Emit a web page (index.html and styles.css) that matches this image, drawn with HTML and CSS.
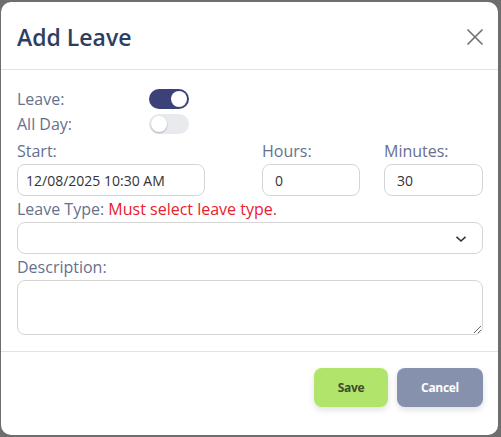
FILE: index.html
```html
<!DOCTYPE html>
<html lang="en">
<head>
<meta charset="utf-8">
<title>Add Leave</title>
<link rel="stylesheet" href="styles.css">
</head>
<body>
<div class="modal">
  <div class="modal-header">
    <h1 class="modal-title">Add Leave</h1>
    <button class="close" aria-label="Close">
      <svg width="18" height="18" viewBox="0 0 18 18"><path d="M1.5 1.5 L16.5 16.5 M16.5 1.5 L1.5 16.5" stroke="#707070" stroke-width="1.6" fill="none"/></svg>
    </button>
  </div>
  <div class="modal-body">
    <div class="switch-row">
      <span class="label">Leave:</span>
      <span class="switch on"><span class="knob"></span></span>
    </div>
    <div class="switch-row second">
      <span class="label">All Day:</span>
      <span class="switch"><span class="knob"></span></span>
    </div>
    <div class="time-grid">
      <div class="field">
        <label class="label">Start:</label>
        <input class="input start" type="text" value="12/08/2025 10:30 AM">
      </div>
      <div class="field">
        <label class="label">Hours:</label>
        <input class="input num" type="text" value="0">
      </div>
      <div class="field">
        <label class="label">Minutes:</label>
        <input class="input num wide" type="text" value="30">
      </div>
    </div>
    <div class="field spaced">
      <label class="label">Leave Type: <span class="error">Must select leave type.</span></label>
      <div class="select">
        <svg class="chev" width="12" height="8" viewBox="0 0 12 8"><path d="M1.5 1.8 L6 6 L10.5 1.8" stroke="#333" stroke-width="1.6" fill="none"/></svg>
      </div>
    </div>
    <div class="field spaced">
      <label class="label">Description:</label>
      <textarea class="textarea"></textarea>
    </div>
  </div>
  <div class="modal-footer">
    <button class="btn save">Save</button>
    <button class="btn cancel">Cancel</button>
  </div>
</div>
</body>
</html>
```

FILE: styles.css
```css
html, body {
  margin: 0;
  height: 100%;
}
body {
  background: #6e6e6e;
  padding: 2px 3px 2px 1px;
  box-sizing: border-box;
  font-family: "Open Sans", "Liberation Sans", sans-serif;
}
.modal {
  background: #fff;
  border-radius: 10px;
  height: 433px;
  display: flex;
  flex-direction: column;
  overflow: hidden;
}
.modal-header {
  display: flex;
  align-items: center;
  justify-content: space-between;
  padding: 19px 14px 16px 16px;
  border-bottom: 1px solid #e3e3e3;
}
.modal-title {
  margin: 0;
  font-size: 23px;
  line-height: 32px;
  font-weight: 600;
  color: #2e3e60;
}
.close {
  border: 0;
  background: none;
  padding: 0;
  width: 18px;
  height: 18px;
  display: flex;
}
.modal-body {
  padding: 19px 15px 16px 16px;
  display: flex;
  flex-direction: column;
}
.label {
  font-size: 16px;
  line-height: 20px;
  color: #66708f;
  display: block;
}
.switch-row {
  display: flex;
  align-items: center;
  height: 20px;
}
.switch-row.second {
  margin-top: 5px;
}
.switch-row .label {
  width: 132px;
}
.switch {
  width: 40px;
  height: 20px;
  border-radius: 10px;
  background: #e9eaee;
  position: relative;
  display: block;
}
.switch.on {
  background: #3c4177;
}
.knob {
  position: absolute;
  top: 2px;
  left: 2px;
  width: 16px;
  height: 16px;
  border-radius: 50%;
  background: #fff;
  box-shadow: 0 1px 2px rgba(0,0,0,0.25);
}
.switch.on .knob {
  left: auto;
  right: 2px;
  box-shadow: none;
}
.time-grid {
  display: grid;
  grid-template-columns: 245px 122px 1fr;
  margin-top: 7px;
}
.field {
  display: flex;
  flex-direction: column;
}
.field.spaced {
  margin-top: 3px;
}
.input, .select, .textarea {
  box-sizing: border-box;
  border: 1px solid #d5d5d5;
  border-radius: 8px;
  background: #fff;
  margin-top: 3px;
  font-family: "Open Sans", "Liberation Sans", sans-serif;
  font-size: 14px;
  color: #333;
  outline: none;
}
.input {
  height: 32px;
  padding: 0 8px;
}
.input.start {
  width: 188px;
}
.input.num {
  width: 98px;
  padding: 0 12px;
}
.input.wide {
  width: 99px;
}
.error {
  color: #e8202e;
}
.select {
  height: 32px;
  position: relative;
  width: 100%;
}
.chev {
  position: absolute;
  right: 15px;
  top: 12px;
}
.textarea {
  height: 55px;
  width: 100%;
  resize: both;
  display: block;
}
.modal-footer {
  border-top: 1px solid #e3e3e3;
  display: flex;
  justify-content: flex-end;
  gap: 9px;
  padding: 16px 15px 0 0;
}
.btn {
  height: 39px;
  border: 0;
  border-radius: 8px;
  font-family: "Open Sans", "Liberation Sans", sans-serif;
  font-weight: 700;
  font-size: 12px;
  letter-spacing: -0.3px;
  box-shadow: 0 3px 6px rgba(0,0,0,0.12);
}
.save {
  width: 74px;
  background: #b0e46a;
  color: #3f4d2e;
}
.cancel {
  width: 86px;
  background: #8692ad;
  color: #fff;
}
```
